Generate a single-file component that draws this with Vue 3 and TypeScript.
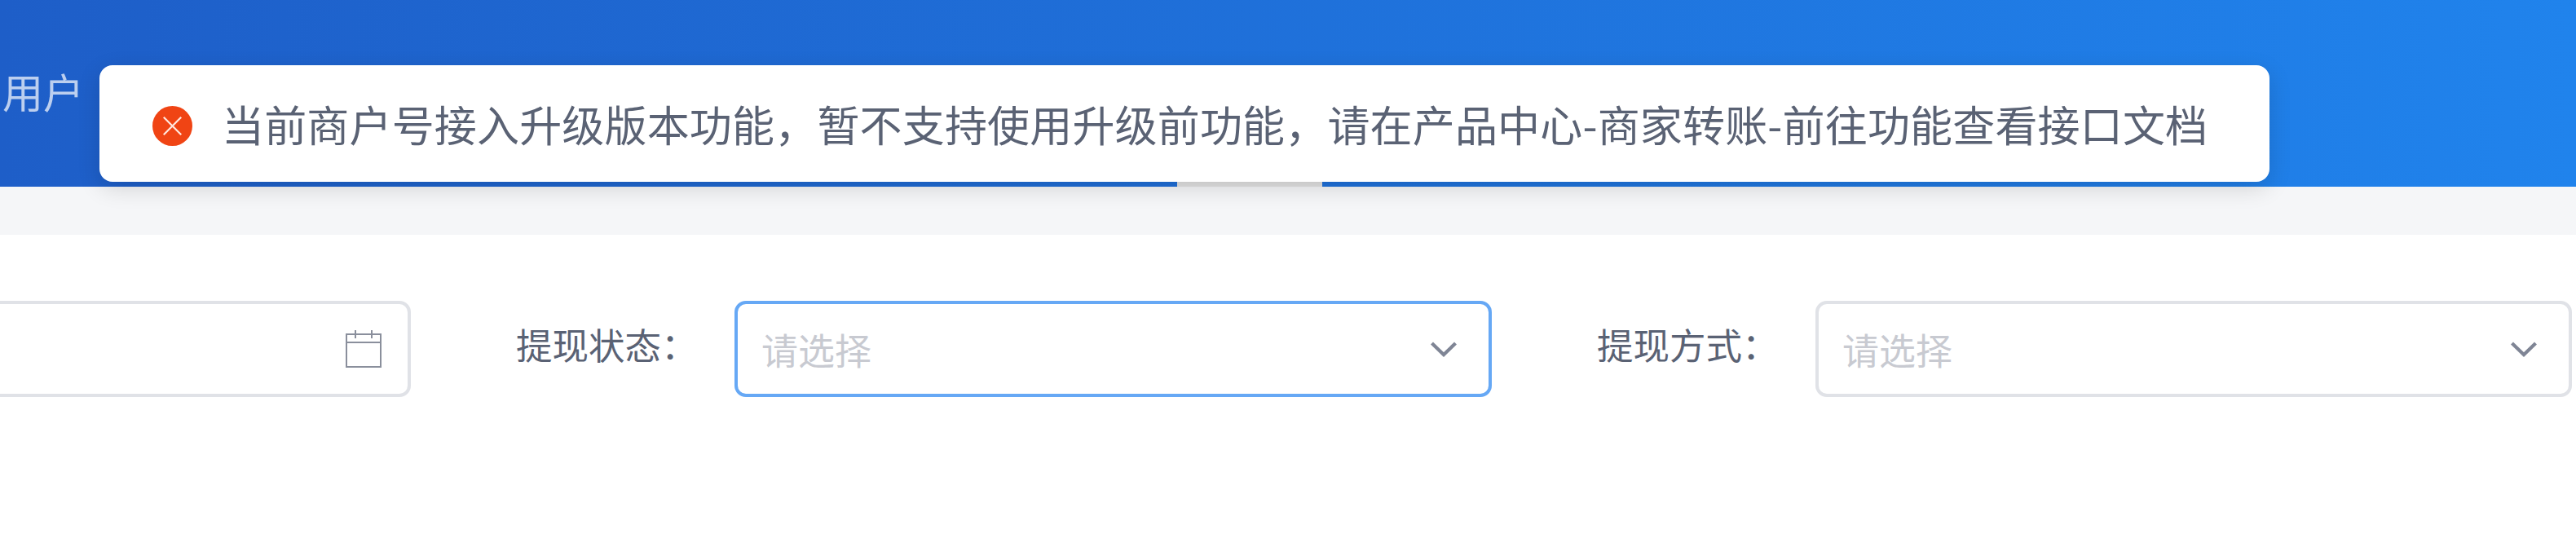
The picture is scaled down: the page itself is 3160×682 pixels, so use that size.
<script setup lang="ts">
const message = '当前商户号接入升级版本功能，暂不支持使用升级前功能，请在产品中心-商家转账-前往功能查看接口文档'
</script>

<template>
  <div class="page">
    <header class="header">
      <span class="nav-item">用户</span>
      <div class="collapse-handle"></div>
    </header>
    <div class="strip"></div>
    <div class="panel">
      <div class="form-row">
        <div class="input date-input">
          <svg class="calendar" viewBox="0 0 44 46" fill="none" stroke="#8a8f9c" stroke-width="2">
            <rect x="1" y="5" width="42" height="40" />
            <path d="M1 15H43M12 0V10M32 0V10" />
          </svg>
        </div>
        <label class="label">提现状态：</label>
        <div class="input select focused">
          <span class="placeholder">请选择</span>
          <svg class="arrow" viewBox="0 0 34 20" fill="none" stroke="#7f8595" stroke-width="4.2">
            <path d="M2.5 3L17 17L31.5 3" />
          </svg>
        </div>
        <label class="label">提现方式：</label>
        <div class="input select">
          <span class="placeholder">请选择</span>
          <svg class="arrow" viewBox="0 0 34 20" fill="none" stroke="#7f8595" stroke-width="4.2">
            <path d="M2.5 3L17 17L31.5 3" />
          </svg>
        </div>
      </div>
    </div>

    <div class="toast">
      <svg class="toast-icon" viewBox="0 0 48 48">
        <circle cx="24" cy="24" r="24" fill="#f04414" />
        <path d="M13.5 13.5L34.5 34.5M34.5 13.5L13.5 34.5" stroke="#ffe6dd" stroke-width="2.2" fill="none" />
      </svg>
      <span class="toast-text">{{ message }}</span>
    </div>
  </div>
</template>

<style>
body {
  background: #fff;
}
</style>

<style scoped>
.page {
  position: relative;
  width: 3160px;
  height: 682px;
  overflow: hidden;
  font-family: "Noto Sans CJK SC", "Liberation Sans", sans-serif;
}

.header {
  position: relative;
  height: 229px;
  background: linear-gradient(90deg, #1e5ec8 0%, #2083ec 100%);
  box-sizing: border-box;
  padding: 79px 0 0 3px;
}

.nav-item {
  display: block;
  font-size: 50px;
  line-height: 64px;
  color: rgba(255, 255, 255, 0.7);
}

.collapse-handle {
  position: absolute;
  left: 1444px;
  bottom: 0;
  width: 178px;
  height: 6px;
  background: #e2e2e2;
}

.strip {
  height: 59px;
  background: #f5f6f8;
}

.panel {
  background: #fff;
  padding-top: 81px;
}

.form-row {
  display: flex;
  align-items: center;
  justify-content: flex-end;
  padding-right: 5px;
}

.input {
  display: flex;
  align-items: center;
  justify-content: space-between;
  flex: none;
  box-sizing: border-box;
  height: 118px;
  border: 4px solid #e0e2e7;
  border-radius: 14px;
  background: #fff;
}

.date-input {
  width: 560px;
  justify-content: flex-end;
  padding-right: 32px;
}

.calendar {
  width: 44px;
  height: 46px;
}

.select {
  width: 928px;
  padding: 0 38px 0 29px;
}

.focused {
  width: 929px;
  border-color: #66a8f5;
}

.label {
  flex: none;
  width: 397px;
  margin-bottom: 14px;
  padding-left: 129px;
  box-sizing: border-box;
  font-size: 44.5px;
  color: #5a6274;
}

.placeholder {
  font-size: 45px;
  color: #c8cad1;
}

.arrow {
  width: 34px;
  height: 20px;
}

.toast {
  position: absolute;
  left: 122px;
  top: 80px;
  display: flex;
  align-items: center;
  gap: 36px;
  box-sizing: border-box;
  width: 2662px;
  height: 143px;
  padding-left: 65px;
  border-radius: 16px;
  background: #fff;
  box-shadow: 0 8px 28px rgba(0, 0, 0, 0.14);
}

.toast-icon {
  flex: none;
  width: 49px;
  height: 49px;
  margin-top: 6px;
}

.toast-text {
  font-size: 52px;
  letter-spacing: 0.17px;
  color: #5a6274;
  white-space: nowrap;
}
</style>
